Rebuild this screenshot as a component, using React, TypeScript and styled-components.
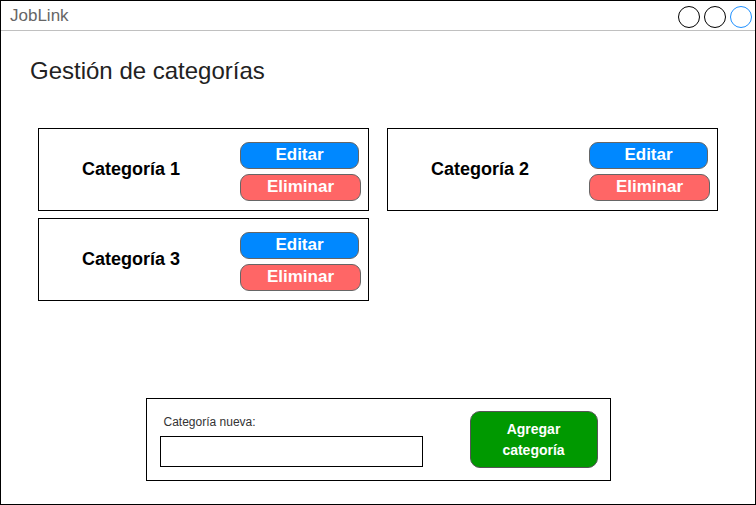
import styled, { createGlobalStyle } from "styled-components";

const GlobalStyle = createGlobalStyle`
    body {
        margin: 0;
        font-family: "Liberation Sans", Arial, sans-serif;
        background: #fff;
    }
`;

const categorias = ["Categoría 1", "Categoría 2", "Categoría 3"];

function App() {
    return (
        <>
            <GlobalStyle />
            <Frame>
                <TitleBar>
                    <AppName>JobLink</AppName>
                    <WindowDots>
                        <Dot />
                        <Dot />
                        <Dot $active />
                    </WindowDots>
                </TitleBar>
                <Heading>Gestión de categorías</Heading>
                <CardGrid>
                    {categorias.map((nombre) => (
                        <Card key={nombre}>
                            <CardName>{nombre}</CardName>
                            <Actions>
                                <ActionButton $color="#0088ff">Editar</ActionButton>
                                <ActionButton $color="#ff6666" $wide>
                                    Eliminar
                                </ActionButton>
                            </Actions>
                        </Card>
                    ))}
                </CardGrid>
                <NewPanel>
                    <Field>
                        <FieldLabel>Categoría nueva:</FieldLabel>
                        <FieldInput />
                    </Field>
                    <AddButton>
                        Agregar
                        <br />
                        categoría
                    </AddButton>
                </NewPanel>
            </Frame>
        </>
    );
}

export default App;

const Frame = styled.div`
    width: 756px;
    height: 505px;
    box-sizing: border-box;
    border: 1px solid #000;
    display: flex;
    flex-direction: column;
`;

const TitleBar = styled.div`
    height: 29px;
    border-bottom: 1px solid #c0c0c0;
    display: flex;
    align-items: center;
    justify-content: space-between;
    padding: 0 3px 0 9px;
`;

const AppName = styled.span`
    font-size: 17px;
    color: #666;
`;

const WindowDots = styled.div`
    display: flex;
    gap: 4px;
    padding-top: 2px;
`;

const Dot = styled.span<{ $active?: boolean }>`
    width: 20px;
    height: 20px;
    border-radius: 50%;
    border: 1px solid ${(p) => (p.$active ? "#1e90ff" : "#000")};
`;

const Heading = styled.h1`
    margin: 26px 0 0 29px;
    font-size: 24px;
    font-weight: normal;
    color: #222;
    line-height: 28px;
`;

const CardGrid = styled.div`
    display: grid;
    grid-template-columns: 331px 331px;
    column-gap: 18px;
    row-gap: 7px;
    margin: 43px 0 0 37px;
`;

const Card = styled.div`
    height: 83px;
    box-sizing: border-box;
    border: 1px solid #000;
    display: flex;
    align-items: flex-start;
`;

const CardName = styled.div`
    flex: 0 0 201px;
    box-sizing: border-box;
    padding: 30px 0 0 43px;
    font-size: 18px;
    font-weight: bold;
    color: #000;
`;

const Actions = styled.div`
    display: flex;
    flex-direction: column;
    gap: 5px;
    padding-top: 13px;
`;

const ActionButton = styled.button<{ $color: string; $wide?: boolean }>`
    width: ${(p) => (p.$wide ? "121px" : "119px")};
    height: 27px;
    box-sizing: border-box;
    border: 1px solid #666;
    border-radius: 9px;
    background: ${(p) => p.$color};
    color: #fff;
    font-family: "Liberation Sans", Arial, sans-serif;
    font-size: 17px;
    font-weight: bold;
    padding: 0 0 2px;
    line-height: 21px;
`;

const NewPanel = styled.div`
    align-self: center;
    margin-top: 97px;
    width: 465px;
    height: 83px;
    box-sizing: border-box;
    border: 1px solid #000;
    display: flex;
    align-items: flex-start;
    padding: 12px 0 0 13px;
`;

const Field = styled.div`
    display: flex;
    flex-direction: column;
`;

const FieldLabel = styled.label`
    font-size: 12px;
    color: #333;
    margin: 4px 0 0 4px;
    line-height: 14px;
`;

const FieldInput = styled.input`
    margin-top: 7px;
    width: 263px;
    height: 31px;
    box-sizing: border-box;
    border: 1px solid #000;
    outline: none;
    padding: 0;
`;

const AddButton = styled.button`
    margin-left: 47px;
    width: 128px;
    height: 57px;
    box-sizing: border-box;
    border: 1px solid #555;
    border-radius: 10px;
    background: #009900;
    color: #fff;
    font-family: "Liberation Sans", Arial, sans-serif;
    font-size: 14px;
    font-weight: bold;
    line-height: 21px;
    padding: 0;
`;
